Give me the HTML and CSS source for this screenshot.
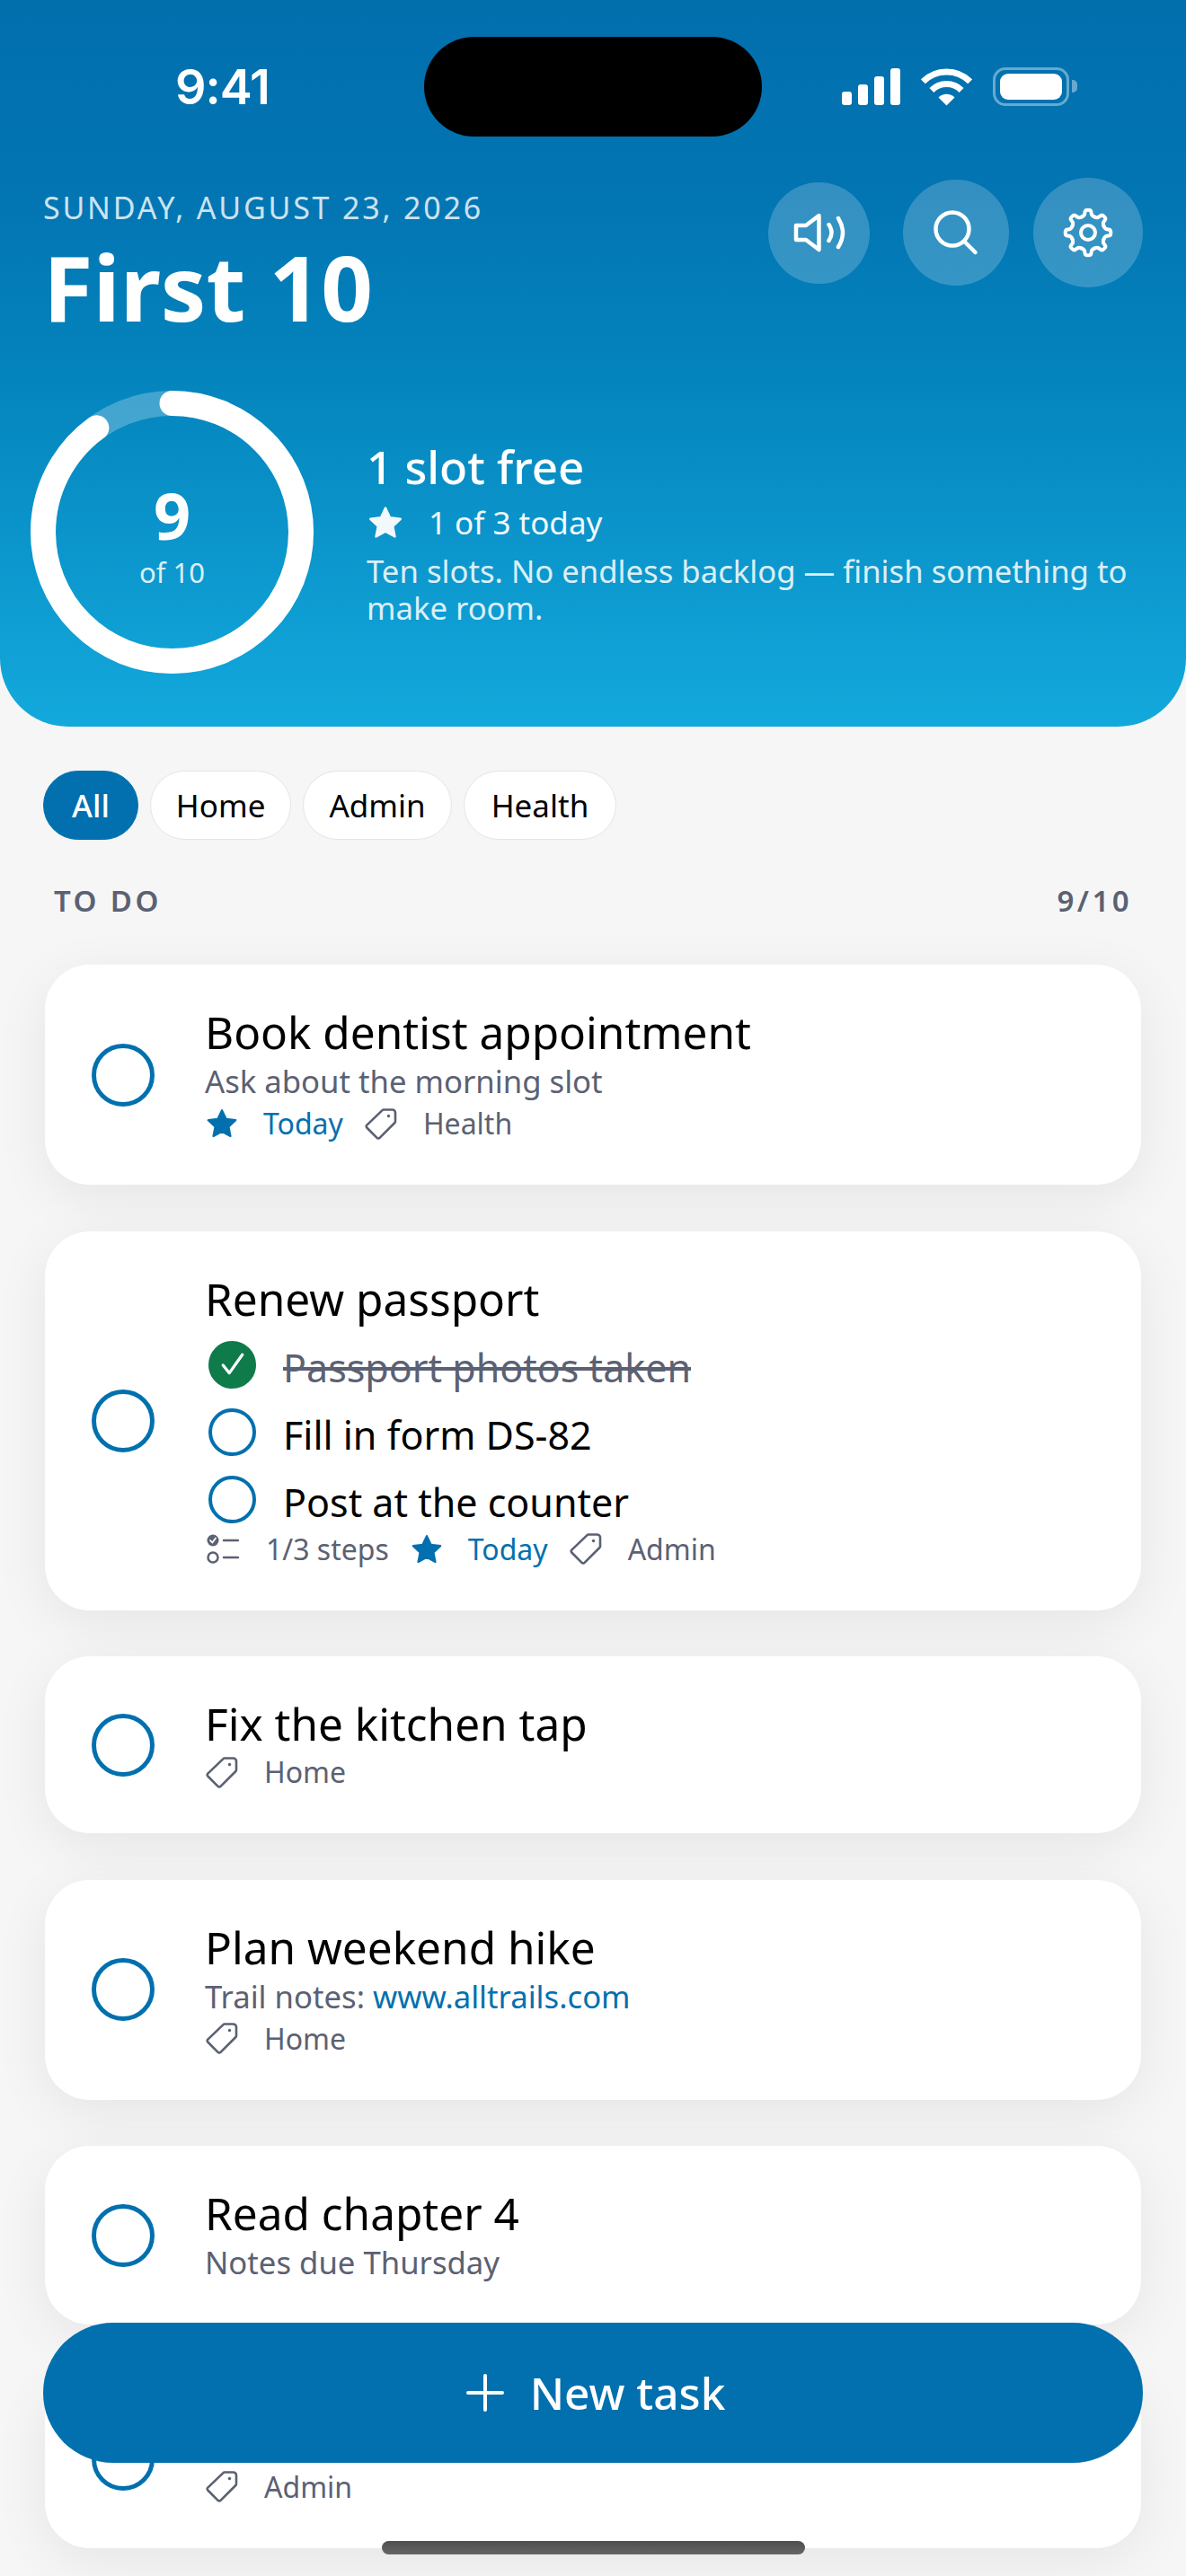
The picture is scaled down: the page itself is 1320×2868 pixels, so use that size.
FILE: index.html
```html
<!DOCTYPE html>
<html lang="en">
  <head>
    <meta charset="utf-8" />
    <meta name="viewport" content="width=device-width,initial-scale=1" />
    <title>First 10</title>
    <link rel="stylesheet" href="styles.css">
  </head>
  <body>
    <svg class="defs" width="0" height="0" aria-hidden="true">
      <defs>
        <symbol id="star" viewBox="0 0 24 24">
          <path d="M12 2.6l2.9 6.1 6.7.9-4.9 4.6 1.3 6.6-6-3.3-6 3.3 1.3-6.6-4.9-4.6 6.7-.9z" fill="currentColor" stroke="currentColor" stroke-width="1.4" stroke-linejoin="round" />
        </symbol>
        <symbol id="tag" viewBox="0 0 37 37">
          <path d="M22 2.5h9.5a3.5 3.5 0 0 1 3.5 3.5v9.5a2 2 0 0 1-.6 1.5L17.5 33.8a2 2 0 0 1-2.9 0L3.3 22.5a2 2 0 0 1 0-2.9L20.5 3.1a2 2 0 0 1 1.5-.6z" fill="none" stroke="currentColor" stroke-width="2.6" stroke-linejoin="round" />
          <circle cx="27.5" cy="9.5" r="1.7" fill="currentColor" />
        </symbol>
        <path id="tooth" d="M22.7 12.5Q25 11.8 26 10L26.8 6Q27 4.7 30 4.7T33.2 6L34 10Q35 11.8 37.3 12.5" fill="none" stroke="#fff" stroke-width="4" stroke-linecap="round" />
      </defs>
    </svg>

    <header class="hero">
      <div class="status">
        <span class="time">9:41</span>
        <span class="island"></span>
        <div class="status-icons">
          <span class="signal"><i></i><i></i><i></i><i></i></span>
          <svg class="wifi" width="57" height="42" viewBox="0 0 57 42">
            <path d="M2.3 14.8A37 37 0 0 1 54.7 14.8M11.9 24.4A23.5 23.5 0 0 1 45.1 24.4" fill="none" stroke="#fff" stroke-width="7" />
            <path d="M28.5 41.5L19.5 32.5A12.7 12.7 0 0 1 37.5 32.5Z" fill="#fff" />
          </svg>
          <span class="battery"><i></i></span>
        </div>
      </div>

      <div class="top">
        <div class="heading">
          <div class="date">SUNDAY, AUGUST 23, 2026</div>
          <h1>First 10</h1>
        </div>
        <div class="actions">
          <button class="round sound">
            <svg width="60" height="60" viewBox="0 0 60 60" fill="none" stroke="#fff" stroke-width="4.5" stroke-linecap="round" stroke-linejoin="round">
              <path d="M29.5 11L15 22H4V38H15L29.5 49Z" />
              <path d="M40.5 21Q46.5 30 40.5 39" />
              <path d="M51 14Q61 30 51 46" />
            </svg>
          </button>
          <button class="round search">
            <svg width="60" height="60" viewBox="0 0 60 60" fill="none" stroke="#fff" stroke-width="4.5" stroke-linecap="round">
              <circle cx="26" cy="26" r="18.5" />
              <path d="M39.5 40L51.5 52" />
            </svg>
          </button>
          <button class="round gear">
            <svg width="60" height="60" viewBox="0 0 60 60">
              <use href="#tooth" />
              <use href="#tooth" transform="rotate(45 30 30)" />
              <use href="#tooth" transform="rotate(90 30 30)" />
              <use href="#tooth" transform="rotate(135 30 30)" />
              <use href="#tooth" transform="rotate(180 30 30)" />
              <use href="#tooth" transform="rotate(225 30 30)" />
              <use href="#tooth" transform="rotate(270 30 30)" />
              <use href="#tooth" transform="rotate(315 30 30)" />
              <circle cx="30" cy="30" r="8" fill="none" stroke="#fff" stroke-width="4" />
            </svg>
          </button>
        </div>
      </div>

      <div class="summary">
        <div class="ring">
          <svg width="315" height="315" viewBox="0 0 315 315" fill="none" stroke-width="28">
            <circle cx="157.5" cy="157.5" r="143.5" stroke="#fff" stroke-opacity="0.25" />
            <circle cx="157.5" cy="157.5" r="143.5" stroke="#fff" stroke-linecap="round" stroke-dasharray="811.4 901.6" transform="rotate(-90 157.5 157.5)" />
          </svg>
          <div class="ring-text">
            <strong>9</strong>
            <span>of 10</span>
          </div>
        </div>
        <div class="summary-text">
          <div class="free">1 slot free</div>
          <div class="today">
            <svg width="42" height="42"><use href="#star" /></svg>
            1 of 3 today
          </div>
          <p>Ten slots. No endless backlog — finish something to make room.</p>
        </div>
      </div>
    </header>

    <nav class="chips">
      <span class="chip active">All</span>
      <span class="chip">Home</span>
      <span class="chip">Admin</span>
      <span class="chip wide">Health</span>
    </nav>

    <div class="section-label">
      <span>TO DO</span>
      <span>9/10</span>
    </div>

    <main class="list">
      <section class="card">
        <span class="check"></span>
        <div class="body">
          <div class="title">Book dentist appointment</div>
          <div class="note">Ask about the morning slot</div>
          <div class="meta">
            <svg class="star" width="38" height="38"><use href="#star" /></svg>
            <span class="today-link">Today</span>
            <svg class="tag" width="37" height="37"><use href="#tag" /></svg>
            <span>Health</span>
          </div>
        </div>
      </section>

      <section class="card">
        <span class="check"></span>
        <div class="body">
          <div class="title">Renew passport</div>
          <div class="step done">
            <span class="step-check">
              <svg width="30" height="30" viewBox="0 0 28 28" fill="none" stroke="#fff" stroke-width="3" stroke-linecap="round" stroke-linejoin="round"><path d="M4 15L10.5 23L24 4" /></svg>
            </span>
            <span>Passport photos taken</span>
          </div>
          <div class="step"><span class="step-check"></span><span>Fill in form DS-82</span></div>
          <div class="step"><span class="step-check"></span><span>Post at the counter</span></div>
          <div class="meta">
            <svg class="steps-icon" width="38" height="38" viewBox="0 0 38 38" fill="none" stroke="#5b6173" stroke-width="2.5" stroke-linecap="round">
              <circle cx="9" cy="9" r="6.5" fill="#5b6173" stroke="none" />
              <path d="M6 9L8.3 11.5L12 6.5" stroke="#fff" stroke-width="1.8" stroke-linejoin="round" />
              <circle cx="9" cy="28" r="5.5" />
              <path d="M21 9H37M21 28H37" />
            </svg>
            <span>1/3 steps</span>
            <svg class="star" width="38" height="38"><use href="#star" /></svg>
            <span class="today-link">Today</span>
            <svg class="tag" width="37" height="37"><use href="#tag" /></svg>
            <span>Admin</span>
          </div>
        </div>
      </section>

      <section class="card">
        <span class="check"></span>
        <div class="body">
          <div class="title">Fix the kitchen tap</div>
          <div class="meta">
            <svg class="tag" width="37" height="37"><use href="#tag" /></svg>
            <span>Home</span>
          </div>
        </div>
      </section>

      <section class="card">
        <span class="check"></span>
        <div class="body">
          <div class="title">Plan weekend hike</div>
          <div class="note">Trail notes: <a href="#">www.alltrails.com</a></div>
          <div class="meta">
            <svg class="tag" width="37" height="37"><use href="#tag" /></svg>
            <span>Home</span>
          </div>
        </div>
      </section>

      <section class="card">
        <span class="check"></span>
        <div class="body">
          <div class="title">Read chapter 4</div>
          <div class="note">Notes due Thursday</div>
        </div>
      </section>

      <section class="card">
        <span class="check"></span>
        <div class="body">
          <div class="title">Call the bank</div>
          <div class="meta">
            <svg class="tag" width="37" height="37"><use href="#tag" /></svg>
            <span>Admin</span>
          </div>
        </div>
      </section>
    </main>

    <button class="fab">
      <svg width="42" height="42" viewBox="0 0 42 42" stroke="#fff" stroke-width="4" stroke-linecap="round"><path d="M21 2V40M2 21H40" /></svg>
      New task
    </button>
    <div class="home-bar"></div>
  </body>
</html>
```

FILE: styles.css
```css
* {
  box-sizing: border-box;
}

html,
body {
  margin: 0;
  height: 2868px;
}

body {
  position: relative;
  overflow: hidden;
  background-color: #f6f6f6;
  color: #000;
  font-family: "Noto Sans", sans-serif;
}

.defs {
  position: absolute;
}

/* header */

.hero {
  height: 809px;
  padding-top: 41px;
  border-radius: 0 0 76px 76px;
  background: linear-gradient(#026fad 0%, #0274b2 25%, #0484bd 52%, #13a9dc 100%);
  color: #fff;
}

.status {
  display: flex;
  align-items: center;
  height: 111px;
  padding: 0 130px 0 195px;
}

.time {
  width: 104px;
  font-family: Inter, sans-serif;
  font-size: 54px;
  font-weight: 600;
  letter-spacing: -1px;
  white-space: nowrap;
}

.island {
  width: 376px;
  height: 111px;
  margin-left: 173px;
  border-radius: 56px;
  background-color: #000;
}

.status-icons {
  display: flex;
  align-items: center;
  gap: 23px;
  margin-left: auto;
}

.signal {
  display: flex;
  align-items: flex-end;
  gap: 7px;
  height: 41px;
}

.signal i {
  width: 11px;
  border-radius: 3px;
  background-color: #fff;
}

.signal i:nth-child(1) { height: 15px; }
.signal i:nth-child(2) { height: 23px; }
.signal i:nth-child(3) { height: 32px; }
.signal i:nth-child(4) { height: 41px; }

.battery {
  position: relative;
  display: flex;
  width: 85px;
  height: 43px;
  padding: 4px 5px;
  border: 3.5px solid rgba(255, 255, 255, 0.4);
  border-radius: 14px;
}

.battery:after {
  content: "";
  position: absolute;
  top: 11px;
  right: -12px;
  width: 6px;
  height: 14px;
  border-radius: 0 5px 5px 0;
  background-color: rgba(255, 255, 255, 0.4);
}

.battery i {
  flex: 1;
  border-radius: 9px;
  background-color: #fff;
}

.top {
  display: flex;
  justify-content: space-between;
  margin-top: 46px;
  padding: 0 48px;
}

.heading {
  padding-top: 10px;
}

.date {
  font-size: 34px;
  line-height: 46px;
  letter-spacing: 2.8px;
  opacity: 0.8;
}

h1 {
  margin: 10px 0 0;
  font-size: 101px;
  font-weight: 700;
  line-height: 110px;
}

.actions {
  display: flex;
  align-items: center;
  gap: 27px;
  height: 122px;
}

.round {
  display: flex;
  align-items: center;
  justify-content: center;
  padding: 0;
  border: 0;
  border-radius: 50%;
  background-color: rgba(255, 255, 255, 0.2);
}

.sound {
  width: 113px;
  height: 113px;
  margin-right: 10px;
}

.search {
  width: 118px;
  height: 118px;
}

.gear {
  width: 122px;
  height: 122px;
}

.summary {
  display: flex;
  align-items: center;
  gap: 59px;
  margin-top: 61px;
  padding: 0 48px 0 34px;
}

.ring {
  display: grid;
  flex: none;
  place-items: center;
  width: 315px;
  height: 315px;
}

.ring > * {
  grid-area: 1 / 1;
}

.ring-text {
  display: flex;
  flex-direction: column;
  align-items: center;
}

.ring-text strong {
  padding-top: 4px;
  font-size: 72px;
  font-weight: 700;
  line-height: 84px;
}

.ring-text span {
  font-size: 31px;
  line-height: 44px;
  opacity: 0.85;
}

.free {
  font-size: 51px;
  font-weight: 500;
  line-height: 62px;
}

.today {
  display: flex;
  align-items: center;
  gap: 27px;
  margin-top: 9px;
  font-size: 35px;
  line-height: 46px;
  opacity: 0.95;
}

.summary-text p {
  margin: 10px 0 0;
  font-size: 34.7px;
  line-height: 41px;
  opacity: 0.85;
}

/* filters */

.chips {
  display: flex;
  gap: 13px;
  margin-top: 49px;
  padding: 0 48px;
}

.chip {
  display: flex;
  align-items: center;
  height: 77px;
  padding: 0 28px;
  border: 1.5px solid #e3e5ea;
  border-radius: 39px;
  background-color: #fff;
  font-size: 35px;
}

.chip.wide {
  padding: 0 30px;
}

.chip.active {
  padding: 0 31px;
  border-color: #0270ae;
  background-color: #0270ae;
  color: #fff;
  font-weight: 500;
}

.section-label {
  display: flex;
  justify-content: space-between;
  margin-top: 44px;
  padding: 0 60px;
  color: #5b6173;
  font-size: 33px;
  font-weight: 600;
  line-height: 48px;
  letter-spacing: 3.4px;
}

/* tasks */

.list {
  display: flex;
  flex-direction: column;
  gap: 51.5px;
  margin-top: 47px;
  padding: 0 50px;
}

.card {
  display: flex;
  align-items: center;
  gap: 56px;
  padding: 47px 52px;
  border-radius: 50px;
  background-color: #fff;
  box-shadow: 0 14px 60px rgba(0, 0, 0, 0.07);
}

.check {
  flex: none;
  width: 70px;
  height: 70px;
  border: 5px solid #0270ae;
  border-radius: 50%;
}

.body {
  min-width: 0;
}

.title {
  font-size: 49.5px;
  line-height: 57px;
}

.note {
  margin-top: 4px;
  color: #5b6173;
  font-size: 34.7px;
  line-height: 44px;
}

.note a {
  color: #0270ae;
  text-decoration: none;
}

.meta {
  display: flex;
  align-items: center;
  margin-top: 4px;
  color: #5b6173;
  font-size: 32px;
  line-height: 42px;
}

.meta span {
  margin-right: 23px;
}

.meta .star {
  margin-right: 27px;
  color: #0270ae;
}

.meta .tag {
  margin-right: 29px;
}

.meta .steps-icon {
  margin-right: 30px;
}

.today-link {
  color: #0270ae;
}

.step {
  display: flex;
  align-items: center;
  gap: 30px;
  height: 53px;
  margin-top: 22px;
  font-size: 43px;
}

.title + .step {
  margin-top: 18px;
}

.step + .meta {
  margin-top: 8px;
}

.step span:last-child {
  padding-top: 6px;
}

.step-check {
  display: flex;
  flex: none;
  align-items: center;
  justify-content: center;
  width: 53px;
  height: 53px;
  margin-left: 4px;
  border: 4px solid #0270ae;
  border-radius: 50%;
}

.step.done .step-check {
  border-color: #0f7b4a;
  background-color: #0f7b4a;
}

.step.done span:last-child {
  color: #5b6173;
  text-decoration: line-through;
}

/* floating */

.fab {
  position: absolute;
  top: 2586px;
  left: 48px;
  display: flex;
  align-items: center;
  justify-content: center;
  gap: 29px;
  width: 1224px;
  height: 156px;
  padding: 0 0 0 6px;
  border: 0;
  border-radius: 78px;
  background-color: #0270ae;
  color: #fff;
  font-family: inherit;
  font-size: 49.5px;
  font-weight: 500;
}

.home-bar {
  position: absolute;
  top: 2829px;
  left: 425px;
  width: 471px;
  height: 15px;
  border-radius: 8px;
  background: linear-gradient(#4e4e4e, #666);
}
```
